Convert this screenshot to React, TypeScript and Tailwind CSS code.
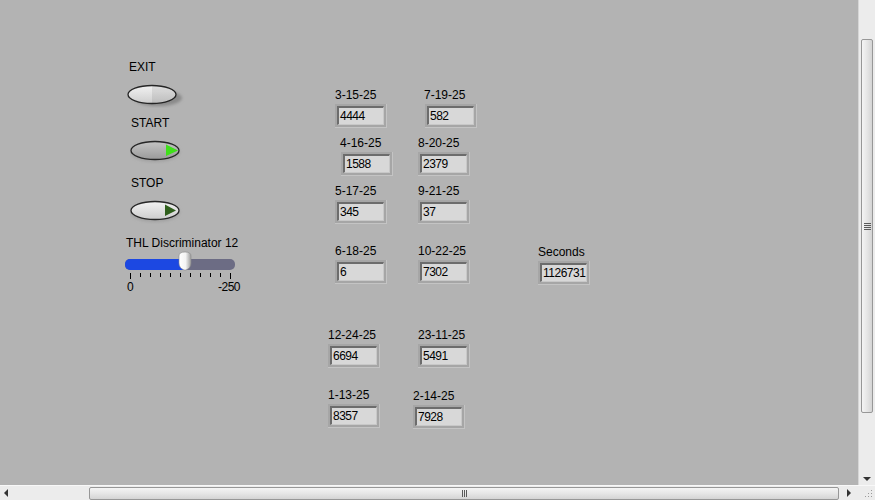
import React from "react";

interface NumProps {
  label: string;
  value: string;
  pos: string;
  boxShift?: string;
}

const font = "font-['Liberation_Sans',Arial,sans-serif]";

const Num: React.FC<NumProps> = ({ label, value, pos, boxShift = "" }) => (
  <div className={`absolute ${pos} flex flex-col items-start`}>
    <div className="text-[12px] leading-[14px] text-black whitespace-nowrap">{label}</div>
    <div className={`mt-[2px] ${boxShift} w-[52px] h-[24px] bg-[#a6a6a6] p-[2px] border-r border-b border-r-[#c4c4c4] border-b-[#c4c4c4]`}>
      <div className="h-full border-t-2 border-l-2 border-t-[#6c6c6c] border-l-[#6c6c6c] border-r border-b border-r-[#c8c8c8] border-b-[#c8c8c8] bg-[#d8d8d8] pl-[1px] text-[12px] tracking-[-0.5px] leading-[17px] text-black">
        {value}
      </div>
    </div>
  </div>
);

const OvalButton: React.FC<{ kind: "exit" | "start" | "stop" }> = ({ kind }) => {
  const id = `g-${kind}`;
  return (
    <svg width="58" height="24" viewBox="0 0 58 24">
      <defs>
        <linearGradient id={id} x1="0" y1="0" x2="0" y2="1">
          {kind === "start" ? (
            <>
              <stop offset="0" stopColor="#c4c4c4" />
              <stop offset="1" stopColor="#9a9a9a" />
            </>
          ) : (
            <>
              <stop offset="0" stopColor="#f2f2f2" />
              <stop offset="1" stopColor="#cdcdcd" />
            </>
          )}
        </linearGradient>
        <filter id={`${id}-b`} x="-20%" y="-40%" width="140%" height="180%">
          <feGaussianBlur stdDeviation="1.5" />
        </filter>
      </defs>
      {kind === "exit" ? (
        <ellipse cx="31" cy="14" rx="24" ry="8" fill="#8a8a8a" filter={`url(#${id}-b)`} />
      ) : (
        <ellipse cx="25" cy="12" rx="25" ry="10" fill="#a0a0a0" filter={`url(#${id}-b)`} />
      )}
      <ellipse cx="25" cy="10.5" rx="24" ry="9" fill={`url(#${id})`} stroke="#262626" strokeWidth="1.3" />
      {kind === "exit" && (
        <path d="M25 1.8 A23 8.2 0 0 1 25 19.2 Z" fill="#000" opacity="0.08" />
      )}
      {kind === "start" && <polygon points="36,4.5 48,10.5 36,16" fill="#3fe01a" />}
      {kind === "stop" && <polygon points="35,4.5 46,10.5 35,16" fill="#2f5f1c" />}
    </svg>
  );
};

const Slider: React.FC = () => {
  const ticks = Array.from({ length: 11 }, (_, i) => i);
  return (
    <div className="absolute left-[124px] top-[251px] w-[118px]">
      <div className="relative h-[20px]">
        <div className="absolute left-[1px] top-[8px] w-[110px] h-[11px] rounded-[5px] bg-[#6c6c84] overflow-hidden">
          <div className="h-full w-[58px] bg-[#1c48e2]" />
        </div>
        <svg className="absolute left-[53px] top-0" width="16" height="20" viewBox="0 0 16 20">
          <defs>
            <linearGradient id="thumb" x1="0" y1="0" x2="1" y2="0">
              <stop offset="0" stopColor="#ffffff" />
              <stop offset="0.55" stopColor="#f4f4f4" />
              <stop offset="1" stopColor="#9c9c9c" />
            </linearGradient>
          </defs>
          <path d="M2 5 Q2 1 8 1 Q14 1 14 5 L14 12 Q14 17 9 19 L7 19 Q2 17 2 12 Z" fill="url(#thumb)" stroke="#8a8a8a" strokeWidth="0.6" />
        </svg>
      </div>
      <svg className="block" width="118" height="10" viewBox="0 0 118 10">
        {ticks.map((i) => (
          <line
            key={i}
            x1={6.5 + i * 10}
            x2={6.5 + i * 10}
            y1="2"
            y2={i === 0 || i === 10 ? 8 : 6}
            stroke="#000"
            strokeWidth="1"
          />
        ))}
      </svg>
      <div className="flex justify-between text-[12px] leading-[12px] text-black pl-[3px] pr-[2px]">
        <span>0</span>
        <span className="tracking-[-0.5px]">-250</span>
      </div>
    </div>
  );
};

const Grip: React.FC<{ vertical?: boolean }> = ({ vertical }) =>
  vertical ? (
    <div className="flex flex-col gap-[1px]">
      <div className="w-[7px] h-[1px] bg-[#5a5a5a]" />
      <div className="w-[7px] h-[1px] bg-[#5a5a5a]" />
      <div className="w-[7px] h-[1px] bg-[#5a5a5a]" />
      <div className="w-[7px] h-[1px] bg-[#5a5a5a]" />
    </div>
  ) : (
    <div className="flex gap-[1px]">
      <div className="w-[1px] h-[7px] bg-[#5a5a5a]" />
      <div className="w-[1px] h-[7px] bg-[#5a5a5a]" />
      <div className="w-[1px] h-[7px] bg-[#5a5a5a]" />
    </div>
  );

export default function App() {
  return (
    <div className={`w-[875px] h-[500px] flex flex-col overflow-hidden ${font}`}>
      <div className="flex flex-1 min-h-0">
        <div className="relative flex-1 bg-[#b3b3b3]">
          <div className="absolute left-[129px] top-[60px] text-[12px] leading-[14px] text-black">EXIT</div>
          <div className="absolute left-[127px] top-[84px]">
            <OvalButton kind="exit" />
          </div>
          <div className="absolute left-[131px] top-[116px] text-[12px] leading-[14px] text-black">START</div>
          <div className="absolute left-[130px] top-[140px]">
            <OvalButton kind="start" />
          </div>
          <div className="absolute left-[131px] top-[176px] text-[12px] leading-[14px] text-black">STOP</div>
          <div className="absolute left-[130px] top-[200px]">
            <OvalButton kind="stop" />
          </div>
          <div className="absolute left-[126px] top-[236px] text-[12px] leading-[14px] text-black whitespace-nowrap">
            THL Discriminator 12
          </div>
          <Slider />

          <Num pos="left-[335px] top-[88px]" label="3-15-25" value="4444" />
          <Num pos="left-[424px] top-[88px]" label="7-19-25" value="582" boxShift="ml-[1px]" />
          <Num pos="left-[340px] top-[136px]" label="4-16-25" value="1588" boxShift="ml-[1px]" />
          <Num pos="left-[418px] top-[136px]" label="8-20-25" value="2379" />
          <Num pos="left-[335px] top-[184px]" label="5-17-25" value="345" />
          <Num pos="left-[418px] top-[184px]" label="9-21-25" value="37" />
          <Num pos="left-[335px] top-[244px]" label="6-18-25" value="6" />
          <Num pos="left-[418px] top-[244px]" label="10-22-25" value="7302" />
          <Num pos="left-[538px] top-[245px]" label="Seconds" value="1126731" />
          <Num pos="left-[328px] top-[328px]" label="12-24-25" value="6694" />
          <Num pos="left-[418px] top-[328px]" label="23-11-25" value="5491" />
          <Num pos="left-[328px] top-[388px]" label="1-13-25" value="8357" />
          <Num pos="left-[413px] top-[389px]" label="2-14-25" value="7928" />
        </div>

        {/* vertical scrollbar */}
        <div className="w-[17px] flex flex-col bg-[#ececec] border-l border-l-[#d6d6d6]">
          <div className="h-[39px]" />
          <div className="mx-[2px] h-[374px] rounded-[2px] border border-[#979797] bg-gradient-to-r from-[#f4f4f4] via-[#e6e6e6] to-[#d4d4d4] flex items-center justify-center">
            <Grip vertical />
          </div>
          <div className="flex-1 flex items-end justify-center pb-[4px]">
            <div className="w-0 h-0 border-l-[4px] border-r-[4px] border-t-[4px] border-l-transparent border-r-transparent border-t-[#333]" />
          </div>
        </div>
      </div>

      {/* horizontal scrollbar */}
      <div className="h-[15px] flex border-t border-t-[#f8f8f8]">
        <div className="flex-1 flex items-center bg-[#ececec]">
          <div className="w-[12px] flex justify-center">
            <div className="w-0 h-0 border-t-[4px] border-b-[4px] border-r-[4px] border-t-transparent border-b-transparent border-r-[#333]" />
          </div>
          <div className="w-[77px]" />
          <div className="h-[13px] w-[750px] rounded-[2px] border border-[#979797] bg-gradient-to-b from-[#f4f4f4] via-[#e6e6e6] to-[#d4d4d4] flex items-center justify-center">
            <Grip />
          </div>
          <div className="flex-1 flex justify-center">
            <div className="w-0 h-0 border-t-[4px] border-b-[4px] border-l-[4px] border-t-transparent border-b-transparent border-l-[#333]" />
          </div>
        </div>
        <div className="w-[17px] bg-[#ececec] flex items-end justify-end p-[2px]">
          <svg width="9" height="9" viewBox="0 0 9 9">
            <rect x="7" y="1" width="1" height="1" fill="#9a9a9a" />
            <rect x="4" y="4" width="1" height="1" fill="#9a9a9a" />
            <rect x="7" y="4" width="1" height="1" fill="#9a9a9a" />
            <rect x="1" y="7" width="1" height="1" fill="#9a9a9a" />
            <rect x="4" y="7" width="1" height="1" fill="#9a9a9a" />
            <rect x="7" y="7" width="1" height="1" fill="#9a9a9a" />
          </svg>
        </div>
      </div>
    </div>
  );
}
